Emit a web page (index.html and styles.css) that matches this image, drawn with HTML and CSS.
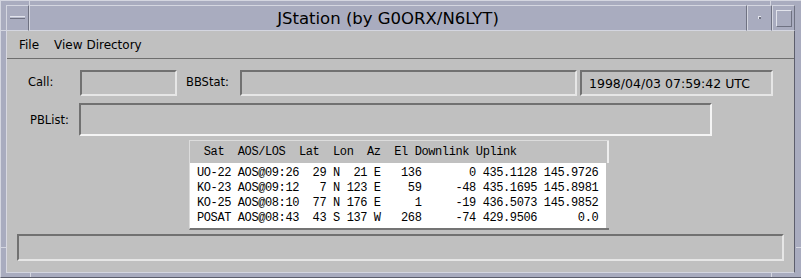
FILE: index.html
```html
<!DOCTYPE html>
<html>
<head>
<meta charset="utf-8">
<title>JStation</title>
<link rel="stylesheet" href="styles.css">
</head>
<body>
<div class="window">
  <span class="notch nv" style="left:28px;top:0"></span>
  <span class="notch nv" style="left:769px;top:0"></span>
  <span class="notch nh" style="left:0;top:29px"></span>
  <span class="notch nv" style="left:29px;bottom:0"></span>
  <span class="notch nv" style="left:770px;bottom:0"></span>
  <span class="notch nh" style="left:0;top:246px"></span>
  <span class="notch nh" style="right:0;top:246px"></span>
  <div class="titlebar">
    <div class="tb-menu"><span class="dash"></span></div>
    <div class="tb-title">JStation (by G0ORX/N6LYT)</div>
    <div class="tb-min"><span class="dot"></span></div>
    <div class="tb-max"><span class="box"></span></div>
  </div>
  <div class="client">
    <div class="menubar">
      <span class="menu-item">File</span>
      <span class="menu-item">View Directory</span>
    </div>
    <div class="content">
      <div class="row1">
        <span class="label call-label">Call:</span>
        <div class="field call-field"></div>
        <span class="label bb-label">BBStat:</span>
        <div class="field bb-field"></div>
        <div class="field date-field">1998/04/03 07:59:42 UTC</div>
      </div>
      <div class="row2">
        <span class="label pb-label">PBList:</span>
        <div class="field pb-field"></div>
      </div>
      <div class="sat-table">
        <div class="sat-head"> Sat  AOS/LOS  Lat  Lon  Az  El Downlink Uplink</div>
        <div class="sat-body">
          <div class="sat-row">UO-22 AOS@09:26  29 N  21 E   136       0 435.1128 145.9726</div>
          <div class="sat-row">KO-23 AOS@09:12   7 N 123 E    59     -48 435.1695 145.8981</div>
          <div class="sat-row">KO-25 AOS@08:10  77 N 176 E     1     -19 436.5073 145.9852</div>
          <div class="sat-row">POSAT AOS@08:43  43 S 137 W   268     -74 429.9506      0.0</div>
        </div>
      </div>
      <div class="field status-field"></div>
    </div>
  </div>
</div>
</body>
</html>
```
FILE: styles.css
```css
html, body {
  margin: 0;
  padding: 0;
  background: #a9acbf;
}

.window {
  position: relative;
  width: 801px;
  height: 278px;
  box-sizing: border-box;
  background: #a9acbf;
  border-top: 1px solid #d4d6e0;
  border-left: 1px solid #d4d6e0;
  border-bottom: 1px solid #5c5e6c;
  padding: 4px 6px 4px 5px;
  display: flex;
  flex-direction: column;
  font-family: "DejaVu Sans", sans-serif;
  color: #000;
  overflow: hidden;
}

.notch {
  position: absolute;
  background: #d4d6e0;
}
.nv { width: 1px; height: 5px; }
.nh { width: 5px; height: 1px; }

/* ---------- title bar ---------- */
.titlebar {
  display: flex;
  height: 26px;
  flex: none;
}
.tb-menu,
.tb-title,
.tb-min,
.tb-max {
  box-sizing: border-box;
  border-top: 1px solid #d4d6e0;
  border-left: 1px solid #d4d6e0;
  border-right: 1px solid #6f7282;
  border-bottom: 1px solid #d4d6e0;
  display: flex;
  align-items: center;
}
.tb-menu {
  width: 23px;
  justify-content: center;
}
.dash {
  width: 15px;
  height: 3px;
  box-sizing: border-box;
  border-top: 1px solid #e2e4ec;
  border-bottom: 1px solid #6f7282;
  background: #b8bbcc;
  margin-top: -2px;
}
.tb-title {
  flex: 1;
  justify-content: center;
  font-size: 16.5px;
  line-height: 24px;
  padding-top: 1px;
}
.tb-min {
  width: 25px;
  justify-content: center;
}
.dot {
  width: 3px;
  height: 3px;
  box-sizing: border-box;
  border-top: 1px solid #e2e4ec;
  border-left: 1px solid #e2e4ec;
  background: #6f7282;
  margin-top: -1px;
}
.tb-max {
  width: 23px;
  justify-content: center;
}
.box {
  width: 16px;
  height: 17px;
  box-sizing: border-box;
  border-top: 1px solid #e2e4ec;
  border-left: 1px solid #e2e4ec;
  border-right: 1px solid #6f7282;
  border-bottom: 1px solid #6f7282;
}

/* ---------- client ---------- */
.client {
  flex: 1;
  min-height: 0;
  display: flex;
  flex-direction: column;
  background: #c0c0c0;
  border-left: 1px solid #d8d8e0;
  border-right: 1px solid #5c5e6c;
  border-bottom: 1px solid #d4d6e0;
}

.menubar {
  height: 27px;
  flex: none;
  border-bottom: 1px solid #6e6e6e;
  display: flex;
  align-items: center;
  padding-left: 12px;
  gap: 15px;
  font-size: 12px;
}

.content {
  flex: 1;
  display: flex;
  flex-direction: column;
  padding: 11px 0 0 0;
}

.label {
  font-size: 11.5px;
  box-sizing: border-box;
}

.field {
  box-sizing: border-box;
  border-top: 2px solid #717171;
  border-left: 2px solid #717171;
  border-bottom: 2px solid #e6e6e6;
  border-right: 2px solid #e6e6e6;
  background: #c0c0c0;
  flex: none;
}

.row1 {
  display: flex;
  align-items: center;
  height: 26px;
  flex: none;
}
.call-label {
  width: 73px;
  padding-left: 21px;
  margin-top: -3px;
}
.call-field {
  width: 97px;
  height: 26px;
}
.bb-label {
  width: 63px;
  padding-left: 9px;
  margin-top: -3px;
}
.bb-field {
  width: 337px;
  height: 26px;
}
.date-field {
  width: 193px;
  height: 26px;
  margin-left: 3px;
  font-size: 12.5px;
  padding-left: 7px;
  display: flex;
  align-items: center;
}

.row2 {
  display: flex;
  align-items: center;
  height: 33px;
  margin-top: 7px;
  flex: none;
}
.pb-label {
  width: 72px;
  padding-left: 23px;
}
.pb-field {
  width: 633px;
  height: 33px;
  border-bottom-color: #f4f4f4;
  border-right-color: #f4f4f4;
}

/* ---------- satellite table ---------- */
.sat-table {
  margin-top: 4px;
  margin-left: 182px;
  width: 420px;
  height: 90px;
  flex: none;
  box-sizing: border-box;
  border-top: 1px solid #dcdcdc;
  border-left: 1px solid #dcdcdc;
  border-bottom: 2px solid #747474;
  display: flex;
  flex-direction: column;
  font-family: "Liberation Mono", monospace;
  font-size: 12px;
  letter-spacing: -0.4px;
}
.sat-head {
  height: 22px;
  line-height: 22px;
  padding-left: 7px;
  border-right: 2px solid #eeeeee;
  background: #c0c0c0;
  flex: none;
  white-space: pre;
}
.sat-body {
  flex: 1;
  background: #ffffff;
  margin-right: 3px;
  padding: 3px 0 0 7px;
}
.sat-row {
  height: 15px;
  line-height: 15px;
  white-space: pre;
}

.status-field {
  margin-top: 4px;
  margin-left: 10px;
  width: 767px;
  height: 27px;
}
```
